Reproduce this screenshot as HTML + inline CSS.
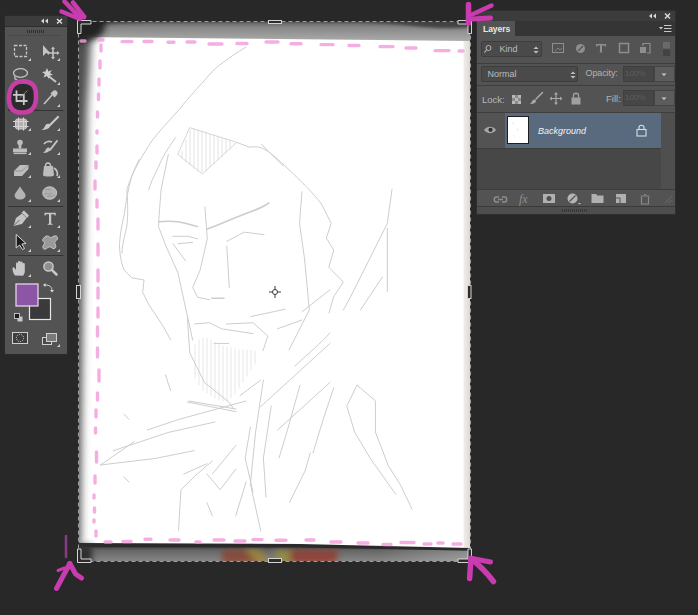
<!DOCTYPE html>
<html><head><meta charset="utf-8">
<style>
*{margin:0;padding:0;box-sizing:border-box}
html,body{width:698px;height:615px;overflow:hidden;background:#282828;font-family:"Liberation Sans",sans-serif}
.a{position:absolute}
svg{position:absolute;left:0;top:0}
</style></head>
<body>
<svg width="698" height="615" viewBox="0 0 698 615">
<defs>
<clipPath id="cvc"><rect x="78" y="21" width="393" height="541"/></clipPath>
<filter id="b4" x="-50%" y="-50%" width="200%" height="200%"><feGaussianBlur stdDeviation="4"/></filter>
<filter id="b3" x="-50%" y="-50%" width="200%" height="200%"><feGaussianBlur stdDeviation="3"/></filter>
<filter id="b2" x="-50%" y="-50%" width="200%" height="200%"><feGaussianBlur stdDeviation="1.5"/></filter>
<filter id="sk" x="-10%" y="-10%" width="120%" height="120%"><feGaussianBlur stdDeviation="0.45"/></filter>
<filter id="b1" x="-50%" y="-50%" width="200%" height="200%"><feGaussianBlur stdDeviation="0.6"/></filter>
<linearGradient id="tg" x1="0" y1="0" x2="0" y2="1">
<stop offset="0" stop-color="#2e2e2e"/><stop offset="0.3" stop-color="#5a5a5a"/><stop offset="0.7" stop-color="#8c8c8c"/><stop offset="1" stop-color="#a0a0a0"/>
</linearGradient>
<linearGradient id="tg3" x1="0" y1="21" x2="0" y2="40" gradientUnits="userSpaceOnUse"><stop offset="0" stop-color="#606060"/><stop offset="0.35" stop-color="#868686"/><stop offset="1" stop-color="#9e9e9e"/></linearGradient>
<linearGradient id="tg2" x1="0" y1="0" x2="0" y2="1"><stop offset="0" stop-color="#000" stop-opacity="0"/><stop offset="0.75" stop-color="#fff" stop-opacity="0.05"/><stop offset="1" stop-color="#fff" stop-opacity="0.12"/></linearGradient>
<linearGradient id="rs" x1="462" y1="0" x2="474" y2="0" gradientUnits="userSpaceOnUse"><stop offset="0" stop-color="#fff" stop-opacity="0"/><stop offset="0.2" stop-color="#eeebe6"/><stop offset="0.7" stop-color="#e0d9d4"/><stop offset="1" stop-color="#d4ccc8"/></linearGradient>
<linearGradient id="bg" x1="0" y1="0" x2="0" y2="1">
<stop offset="0" stop-color="#2a2a2a"/><stop offset="0.25" stop-color="#666"/><stop offset="0.65" stop-color="#858585"/><stop offset="1" stop-color="#8a8a8a"/>
</linearGradient>
<linearGradient id="bgh" x1="0" y1="0" x2="1" y2="0">
<stop offset="0" stop-color="#fff" stop-opacity="0"/><stop offset="0.75" stop-color="#fff" stop-opacity="0"/><stop offset="1" stop-color="#fff" stop-opacity="0.25"/>
</linearGradient>
</defs>
<!-- canvas -->
<g clip-path="url(#cvc)">
<rect x="78" y="21" width="393" height="541" fill="#fff"/>
<!-- left shade -->
<polygon points="60,21 92,21 90,60 87,110 85,200 83,300 81.5,420 80.5,545 60,545" fill="#505050" filter="url(#b4)"/>
<!-- top band -->
<polygon points="70,10 480,10 480,41 380,40 280,39 180,38 78,37" fill="url(#tg3)"/>
<polygon points="70,10 480,10 480,41 380,40 280,39 180,38 78,37" fill="url(#tg2)"/>
<path d="M70,10 L480,10 L480,26 C455,30 430,28 405,25 C380,22.5 360,22 340,22 C300,21.5 200,21.5 150,22 L70,25 Z" fill="#424242" filter="url(#b2)"/>
<polygon points="60,10 108,10 104,32 96,39 60,48" fill="#222" filter="url(#b3)"/>
<!-- right strip -->
<rect x="462" y="41" width="12" height="510" fill="url(#rs)"/>
<!-- bottom band -->
<polygon points="70,544 300,545 470,549 480,549 480,570 70,570" fill="url(#bg)"/>
<polygon points="70,544 300,545 470,549 480,549 480,570 70,570" fill="url(#bgh)"/>
<g filter="url(#b3)" opacity="0.75">
<polygon points="222,550 262,550 262,563 222,563" fill="#8e3a26"/>
<polygon points="245,549 258,549 272,563 258,563" fill="#a68a2c"/>
<polygon points="275,550 290,550 292,563 276,563" fill="#9c9034"/>
<polygon points="290,550 338,550 336,563 290,563" fill="#983224"/>
</g>
<polygon points="70,543 300,544 470,548 480,548 480,551 300,547.5 70,547" fill="#2a2a2a" filter="url(#b1)"/>
<rect x="66" y="545" width="26" height="20" fill="#2e2e2e" filter="url(#b3)"/>
</g>
<!-- sketch -->
<g fill="none" stroke="#b8b8b8" stroke-width="1" stroke-linecap="round" stroke-linejoin="round" opacity="0.7" filter="url(#sk)">
<path d="M246,47 C228,58 215,68 210,74 C198,88 188,98 180.5,108 C170,120 160,130 151,142 C143,155 136,166 131.7,176.6 C128,190 126,200 124.4,214 C121,228 119.5,240 119.5,246 C120,258 122,265 124.4,270.5 L131.7,277.8 L144,280 L142.7,292.4 L148.8,304.6 L163.4,326.6 L170.7,340"/>
<path d="M139,159.5 C134,170 130,180 126.8,190 C128,205 128,215 126.8,226.6 C124,238 122,247 122,253"/>
<path d="M175.6,137.6 C168,148 162,158 158.5,166.8 C154,176 150,184 148.8,190"/>
<path d="M190,127.8 L236.6,142.4 L202.4,174 L178,154.6 Z" stroke-width="0.8"/>
<path d="M182,151 V158 M186,140 V162 M190,130 V165 M194,129 V168 M198,130 V171 M202,131 V173 M206,132 V171 M210,134 V167 M214,135 V164 M218,136 V160 M222,137 V157 M226,139 V153 M230,140 V149" stroke-width="0.55"/>
<path d="M236.6,142.4 L250,147.3 C262,145 268,150 288,168.8 C300,180 315,195 321.5,204"/>
<path d="M261.5,144.4 L283.4,166"/>
<path d="M321.5,204 L331.2,223.4 L326.3,238 L333.7,250 L328.8,267.3 L343.4,282 L333.7,296.6 L329,313"/>
<path d="M302,191.7 L299.5,223.4 L304.4,257.6 L309.3,310 L289,350"/>
<path d="M392,189.3 L387.3,223.4 L372.7,252.7 L350.7,296.6 L343.4,310"/>
<path d="M387.3,228.3 L387.3,291.7"/>
<path d="M360.5,310 L382.4,277"/>
<path d="M168.3,154.6 L161,190 C160,205 159,215 158.5,226.6 L165.9,246 L178,273 L185.4,307 L192.7,340"/>
<path d="M158.5,221.7 C165,221 172,221 178,221.7 C186,223 192,225 197.6,226.6" stroke-width="1.5"/>
<path d="M173,236.3 L187.8,236.3 L197.6,238.8 M178,243.7 L192.7,242.4"/>
<path d="M173,243.7 L185.4,260.7"/>
<path d="M204.9,207 L207.3,238.8 L200,270.5 L192.7,287.6 L197.6,297.3 L209.8,299.8"/>
<path d="M211.7,298.3 L224,298.3" stroke-width="1.4"/>
<path d="M207.3,229 C222,224 238,216 250,212 C258,209 265,206 268.8,203" stroke-width="1.6"/>
<path d="M226.8,241.2 L244.4,232.2 L264,234.6"/>
<path d="M226.8,246 L229.3,287.6"/>
<path d="M194.6,324 L209.3,322.7 L221.5,328.8 L253.2,333.7"/>
<path d="M214,343.4 L228.8,343.4"/>
<path d="M226.3,324 L253,322.7 L267.8,336 L263,350.7"/>
<path d="M250.7,316.6 L284.9,309.3 M302,311.7 L330,289.8"/>
<path d="M187.3,316.6 L189.8,353 L204.4,382.4 L228.8,402 L233.7,409"/>
<path d="M195,345 V378 M199,340 V385 M203,338 V390 M207,338 V393 M211,340 V396 M215,342 V398 M219,344 V400 M223,346 V401 M227,347 V401 M231,348 V398 M235,349 V394 M239,350 V388 M243,350 V382 M247,350 V376 M251,350 V370 M255,351 V364" stroke-width="0.5"/>
<path d="M260.5,406.8 L330,343.4 M277.6,430 L330,382.4 M277.6,328.8 L302,320"/>
<path d="M187.3,402 L236,411.7"/>
<path d="M100.4,465 L134.3,441.6 M100.4,465 L155,458.5 L194,450.7"/>
<path d="M113.4,450.7 L168,432.5 L215,422"/>
<path d="M147.3,430 L178.5,419.5 L246,401"/>
<path d="M189,401 L235.8,409"/>
<path d="M165.5,375 L170.7,390.8"/>
<path d="M123.9,414 L129,419.5 M123.9,476.8 L129,482"/>
<path d="M178.5,530 L181,489.8 L194,476.8 L212.4,461"/>
<path d="M183.75,474 L207,463.75"/>
<path d="M207,474 L220.2,489.8 L235.8,469 M235.8,445.5 L212.4,474"/>
<path d="M207,502.8 L212.4,515.8 M246,482 L235.8,515.8"/>
<path d="M357,385.2 L346.8,406 L354.6,432 L370,458 L396,494.6 M357,385.2 L375.4,400.8 L375.4,432 L388.4,466 L400,484 L412,509"/>
<path d="M263.4,380 L255.6,432 L250.4,484 L260.8,531"/>
<path d="M300,385.2 L286.9,432 L279,458"/>
<path d="M333.75,387.8 L323.3,419 L313,453"/>
<path d="M310.3,453 L305,471 L289.5,502.4"/>
<path d="M271.25,406 L263.4,458 L266,497"/>
<path d="M240,395.6 L260.8,380 M250.4,427 L245.2,458 L253,492"/>
<path d="M295,366 C310,352 320,344 330,333"/>
</g>
<!-- crosshair -->
<g stroke="#3a3a3a" stroke-width="1" fill="none">
<circle cx="275" cy="292" r="2.5"/>
<path d="M275,286 V289.5 M275,294.5 V298 M269,292 H272.5 M277.5,292 H281"/>
</g>
<!-- pink dashes -->
<g stroke="#f29ddc" stroke-width="3.4" stroke-linecap="round" fill="none" opacity="0.82" filter="url(#sk)">
<path d="M81,41 h4 M99,40 h4 M122,41.6 h10 M144,41.5 h8 M168,42.3 h6 M187,42 h8 M209,44 h13 M237,43.5 h10 M266,42 h12 M291,43.8 h10 M321,44.6 h12 M349,45.5 h10 M380,46.6 h13 M406,48 h10 M435,50.6 h14 M459,51 h4"/>
<path d="M101,45 V51 M100,61 V68 M99,79 V85 M98.5,94 V99.5 M97.5,112 V117 M97,131 V133 M97,146 V153 M96,162 V168 M95,181 V189 M97,200 V207 M98,219 V229 M98,244 V255 M98,270 V281 M98,288 V298 M98,308 V317 M97.5,327 V336 M97.5,348 V357 M99,370 V381 M97.5,393 V400 M96,410 V417 M95.5,428 V433 M96.5,452 V462 M95,476 V483 M94,495 V498 M94.5,508 V512 M94,520 V522 M96,531 V536"/>
<path d="M105,542 h6 M123,541.5 h8 M145,539.3 h6 M170,540 h9 M196,542 h4 M214,540 h10 M235,541 h10 M253,539.6 h9 M276,540.3 h10 M306,540 h8 M331,542 h10 M358,543 h10 M383,544.5 h8 M401,542.5 h13 M424,544 h7 M438,543 h5 M453,544 h8"/>
</g>
<!-- crop marquee -->
<rect x="78.5" y="21.5" width="392" height="540" fill="none" stroke="#2a2a2a" stroke-width="1"/>
<rect x="78.5" y="21.5" width="392" height="540" fill="none" stroke="#9c9c9c" stroke-width="1.1" stroke-dasharray="4 3"/>
<g fill="#2c2c2c" stroke="#d4d4d4" stroke-width="1">
<path d="M77.5,20.5 H91 V24 H81 V33.5 H77.5 Z"/>
<path d="M471.5,20.5 H458 V24 H468 V33.5 H471.5 Z"/>
<path d="M77.5,562.5 V549 H81 V559 H91 V562.5 Z"/>
<path d="M471.5,562.5 V549 H468 V559 H458 V562.5 Z"/>
<rect x="268.5" y="20.5" width="13" height="3"/>
<rect x="268.5" y="558.5" width="13" height="4"/>
<rect x="76.5" y="285.5" width="4" height="13"/>
<rect x="467.5" y="285.5" width="3.5" height="13"/>
</g>
</svg>

<!-- toolbar panel -->
<div class="a" style="left:4px;top:15px;width:64px;height:340px;background:#535353;border:1px solid #2b2b2b;border-radius:2px"></div>
<div class="a" style="left:5px;top:16px;width:62px;height:11px;background:#3c3c3c;border-bottom:1px solid #2e2e2e"></div>
<svg width="698" height="615" viewBox="0 0 698 615" style="pointer-events:none">
<g fill="#d8d8d8">
<!-- collapse/close -->
<path d="M44,18.5 L41,21 L44,23.5Z M48,18.5 L45,21 L48,23.5Z"/>
</g>
<path d="M57,19 L62,23.5 M62,19 L57,23.5" stroke="#e0e0e0" stroke-width="1.4"/>
<!-- grip -->
<path d="M27,31.5 H44" stroke="#2f2f2f" stroke-width="3" stroke-dasharray="1 1"/>
<path d="M9,35.5 H62" stroke="#4a4a4a" stroke-width="1"/>
<!-- separators -->
<path d="M8,110.5 H63.5 M8,206.5 H63.5 M8,255.5 H63.5" stroke="#333" stroke-width="1"/>
<!-- flyout triangles -->
<g fill="#d0d0d0">
<path d="M31,58 L31,61 L28,61Z M60,58 L60,61 L57,61Z"/>
<path d="M31,82 L31,85 L28,85Z M60,82 L60,85 L57,85Z"/>
<path d="M60,104 L60,107 L57,107Z"/>
<path d="M31,128 L31,131 L28,131Z M60,128 L60,131 L57,131Z"/>
<path d="M31,152 L31,155 L28,155Z M60,152 L60,155 L57,155Z"/>
<path d="M31,175 L31,178 L28,178Z M60,175 L60,178 L57,178Z"/>
<path d="M31,199 L31,202 L28,202Z M60,199 L60,202 L57,202Z"/>
<path d="M31,225 L31,228 L28,228Z M60,225 L60,228 L57,228Z"/>
<path d="M31,249 L31,252 L28,252Z M60,249 L60,252 L57,252Z"/>
<path d="M31,274 L31,277 L28,277Z"/>
<path d="M60,344 L60,347 L57,347Z"/>
</g>
<g fill="none" stroke="#c4c4c4" stroke-width="1.3">
<!-- marquee -->
<rect x="14.5" y="45.5" width="12" height="11" stroke-dasharray="3 1.5"/>
<!-- lasso -->
<ellipse cx="20.5" cy="73" rx="7" ry="4.3"/>
<path d="M15,76 C14,79 16,80 17,79"/>
</g>
<!-- move -->
<path d="M43,45 L43,56 L46,53 L50,53 Z" fill="#c4c4c4"/>
<path d="M53,48 V58 M48,53 H58" stroke="#c4c4c4" stroke-width="1.6"/>
<path d="M53,46.5 L51,49 H55Z M53,59.5 L51,57 H55Z M46.5,53 L49,51 V55Z M59.5,53 L57,51 V55Z" fill="#c4c4c4"/>
<!-- wand -->
<path d="M46,74 L56,82" stroke="#c4c4c4" stroke-width="2"/>
<path d="M47,68 L48.5,71.5 L52,70 L50,73 L53,75 L49.5,75.5 L49,79 L47,76 L43.5,77.5 L45,74 L42,72 L45.5,71.5Z" fill="#cfcfcf"/>
<!-- crop selected bg + icon -->
<path d="M8,110 H38" stroke="#333" stroke-width="1"/>
<path d="M22,84 C31,83.5 34.5,88 34.5,96 C35,105 31.5,110.5 22.5,111 C13.5,111.5 10,106 10.5,97 C11,89 14.5,84.5 22,84Z" fill="#2b2b2b"/>
<path d="M16.5,90.5 V101 H27.5 M13,94.8 H23.8 V105" fill="none" stroke="#cacaca" stroke-width="1.8"/>
<path d="M19.5,98 L27.5,90.5" stroke="#9a9a9a" stroke-width="0.8"/>
<!-- magenta ring -->
<path d="M21,81.5 C32,80.5 36,86 36,95 C36.5,106 32.5,112.5 22.5,112.5 C12.5,113 8.5,107 9,97 C9.5,88 13.5,82 21,81.5Z" fill="none" stroke="#c63fa6" stroke-width="4.6"/>
<!-- eyedropper -->
<path d="M44,104 L52,95" stroke="#c4c4c4" stroke-width="1.6"/>
<path d="M50.5,93.5 L54.5,97.5 L56.5,95.5 C58,94 58,92 56.5,91 C55.5,90 54,90 52.5,91.5Z" fill="#c4c4c4"/>
<!-- healing -->
<rect x="15.5" y="119" width="11" height="10" rx="2" fill="#b8b0b0" stroke="#d0d0d0" stroke-width="1"/>
<path d="M13,121.5 H28.5 M13,126.5 H28.5 M18.5,117.5 V130.5 M23.5,117.5 V130.5" stroke="#d6d6d6" stroke-width="1"/>
<!-- brush -->
<path d="M49,126 L58,117" stroke="#c8c8c8" stroke-width="2.2" stroke-linecap="round"/>
<path d="M41.5,130 C45,130 50,129 50,125.5 C50,123.5 47.5,123 46,124.5 C44.5,126.5 44,129 41.5,130Z" fill="#c8c8c8"/>
<!-- stamp -->
<g fill="#bdbdbd">
<circle cx="20" cy="142.5" r="2.8"/>
<rect x="18.6" y="143" width="2.8" height="5.5"/>
<rect x="13" y="148.5" width="14" height="3.5"/>
<rect x="13.5" y="152.5" width="13" height="1.6"/>
</g>
<!-- history brush -->
<path d="M50,150 L57,141" stroke="#c4c4c4" stroke-width="2" stroke-linecap="round"/>
<path d="M43,153 C46,153 50,152 50,149 C50,147.5 48,147 47,148 C45.5,149.5 45,152 43,153Z" fill="#c4c4c4"/>
<path d="M44,144 C46,141 50,141 52,142" fill="none" stroke="#c4c4c4" stroke-width="1.6"/>
<!-- eraser -->
<path d="M14,171 L20,165 L28.5,165 L28.5,169 L22,176 L14,176Z" fill="#bdbdbd"/>
<path d="M14,171 L22,171 L28.5,165" fill="none" stroke="#8a8a8a" stroke-width="0.8"/>
<!-- bucket -->
<path d="M44,166 L53,166 L54,175 C54,177 43,177 43,175Z" fill="#bdbdbd"/>
<path d="M45.5,166 C45.5,162 50.5,162 50.5,166" fill="none" stroke="#c4c4c4" stroke-width="1.3"/>
<path d="M54,168 C57,170 58,173 57,176" fill="none" stroke="#c4c4c4" stroke-width="1.6"/>
<!-- drop -->
<path d="M20,186.2 C22,190 25.5,193 25.5,195.5 C25.5,198 23,199.5 20,199.5 C17,199.5 14.7,198 14.7,195.5 C14.7,193 18,190 20,186.2Z" fill="#b4b4b4"/>
<!-- sponge -->
<ellipse cx="49.7" cy="193" rx="7" ry="6.3" fill="#b0b0b0" stroke="#cfcfcf" stroke-width="0.8"/>
<path d="M45,190 C47,188 49,191 51,189 M44.5,194 C47,192 49,196 52,193 M47,197 C49,195 52,198 55,195" fill="none" stroke="#8a8a8a" stroke-width="0.7"/>
<!-- pen -->
<path d="M13.5,226 L16,218 L22,213.5 L26.5,218 L22,224Z" fill="#c4c4c4"/>
<path d="M21.5,212.5 L24,210.5 L29,215.5 L27,218Z" fill="#c4c4c4"/>
<path d="M14,225.5 L19.5,220" stroke="#555" stroke-width="0.8"/>
<!-- T -->
<path d="M44.5,212.8 H55.7 V215.5 H54.8 L54,214.2 H51.2 V223.5 L52.7,224.2 V224.8 H47.5 V224.2 L49,223.5 V214.2 H46.2 L45.4,215.5 H44.5Z" fill="#c8c8c8"/>
<!-- path selection -->
<path d="M16.2,234.5 L16.2,248 L19.5,245 L22.5,249.5 L24.5,248.5 L21.8,244 L26,243.5Z" fill="#1c1c1c" stroke="#d8d8d8" stroke-width="1"/>
<!-- custom shape -->
<path d="M44,238 C46,234 50,237 51,238 C53,236 58,234 57.5,239 C56,241 54,242 55,244 C57,247 55,250 52,248 C50,246 48,247 46,249 C42,250 42,246 45,243 C42,241 42,239 44,238Z" fill="#9a9a9a" stroke="#c8c8c8" stroke-width="1"/>
<!-- hand -->
<path d="M15,275.5 C13,273 12.5,270.5 12.5,268 C13,267 14,267 15,268.5 L16,270 L16,263.5 C16,262 18,262 18,263.5 L18,268 L18,262 C18,260.5 20.3,260.5 20.3,262 L20.3,268 L20.3,262.5 C20.3,261 22.6,261 22.6,262.5 L22.6,268.5 L22.6,264 C22.6,262.5 24.8,262.5 24.8,264 L24.8,271 C24.8,273 24,274.5 23,275.7Z" fill="#c8c8c8"/>
<!-- zoom -->
<circle cx="48.5" cy="266.5" r="4.6" fill="#8e8e8e" stroke="#c8c8c8" stroke-width="1.5"/>
<path d="M51.8,269.8 L56.5,274.5" stroke="#c8c8c8" stroke-width="2.5" stroke-linecap="round"/>
<!-- colors -->
<rect x="29.5" y="298.5" width="21" height="21" fill="#3a3a3a" stroke="#e8e8e8" stroke-width="1.2"/>
<rect x="16" y="284" width="22" height="22" fill="#8c55a6" stroke="#ebe0ee" stroke-width="1.2"/>
<path d="M45,285 C50,285 52,287 52,291" fill="none" stroke="#d8d8d8" stroke-width="1"/>
<path d="M43,285 L45.5,283 V287Z M52,292.5 L50,290 H54Z" fill="#d8d8d8"/>
<rect x="17.5" y="316.5" width="5" height="5" fill="#c8c8c8"/>
<rect x="14.5" y="313.5" width="5" height="5" fill="#1e1e1e" stroke="#d8d8d8" stroke-width="0.8"/>
<!-- quick mask -->
<rect x="12.5" y="332.5" width="15" height="11" fill="#3e3e3e" stroke="#cfcfcf" stroke-width="1"/>
<circle cx="20" cy="338" r="3.6" fill="none" stroke="#cfcfcf" stroke-width="1" stroke-dasharray="1.2 1"/>
<!-- screen mode -->
<rect x="42.5" y="337.5" width="9" height="7" fill="#484848" stroke="#d0d0d0" stroke-width="1"/>
<rect x="46.5" y="333.5" width="10" height="8" fill="#7a7a7a" stroke="#d0d0d0" stroke-width="1"/>
</svg>

<!-- layers panel -->
<div class="a" style="left:476px;top:9.5px;width:200px;height:205.5px;background:#535353;border:1px solid #2e2e2e"></div>
<div class="a" style="left:477px;top:10.5px;width:198px;height:10.5px;background:#3c3c3c"></div>
<div class="a" style="left:477px;top:21px;width:198px;height:15px;background:#353535"></div>
<div class="a" style="left:477px;top:21px;width:38px;height:15px;background:#535353"></div>
<div class="a" style="left:483px;top:24px;font-size:8.6px;color:#e8e8e8;font-weight:bold;letter-spacing:-0.1px">Layers</div>
<!-- separators -->
<div class="a" style="left:477px;top:63px;width:198px;height:1px;background:#3e3e3e"></div>
<div class="a" style="left:477px;top:85px;width:198px;height:1px;background:#3e3e3e"></div>
<!-- kind dropdown -->
<div class="a" style="left:481px;top:41px;width:61px;height:16px;background:#4a4a4a;border:1px solid #3d3d3d;border-radius:2px"></div>
<div class="a" style="left:499.5px;top:43.5px;font-size:9px;color:#bcbcbc">Kind</div>
<!-- normal dropdown -->
<div class="a" style="left:481px;top:66px;width:97px;height:16px;background:#4a4a4a;border:1px solid #3d3d3d;border-radius:2px"></div>
<div class="a" style="left:487.5px;top:68.5px;font-size:9px;color:#bcbcbc">Normal</div>
<div class="a" style="left:585.5px;top:67.5px;font-size:9px;color:#b4b4b4;letter-spacing:-0.1px">Opacity:</div>
<div class="a" style="left:623px;top:66px;width:31px;height:16px;background:#464646;border:1px solid #3f3f3f"></div>
<div class="a" style="left:625px;top:69px;font-size:8px;color:#5e5e5e">100%</div>
<div class="a" style="left:654px;top:66px;width:21px;height:16px;background:#5c5c5c;border:1px solid #444"></div>
<div class="a" style="left:482px;top:94px;font-size:9.5px;color:#b8b8b8">Lock:</div>
<div class="a" style="left:606px;top:93px;font-size:9.5px;color:#b4b4b4">Fill:</div>
<div class="a" style="left:623px;top:90px;width:31px;height:16px;background:#464646;border:1px solid #3f3f3f"></div>
<div class="a" style="left:625px;top:93px;font-size:8px;color:#5e5e5e">100%</div>
<div class="a" style="left:654px;top:90px;width:21px;height:16px;background:#5c5c5c;border:1px solid #444"></div>
<!-- layer row -->
<div class="a" style="left:477px;top:112px;width:198px;height:1px;background:#3e3e3e"></div>
<div class="a" style="left:505px;top:113px;width:156px;height:35px;background:#5a6a7e"></div>
<div class="a" style="left:477px;top:148px;width:198px;height:1px;background:#3c3c3c"></div>
<div class="a" style="left:477px;top:149px;width:184px;height:40px;background:#474747"></div>
<div class="a" style="left:661px;top:113px;width:14px;height:76px;background:#4f4f4f"></div>
<div class="a" style="left:507px;top:116px;width:22px;height:28px;background:#fff;border:1.5px solid #1e1e1e"></div>
<div class="a" style="left:538px;top:126px;font-size:9px;color:#eef2f6;font-style:italic">Background</div>
<!-- footer -->
<div class="a" style="left:477px;top:189px;width:198px;height:1px;background:#3c3c3c"></div>
<div class="a" style="left:477px;top:206px;width:198px;height:1px;background:#3a3a3a"></div>
<div class="a" style="left:477px;top:207px;width:198px;height:7px;background:#4e4e4e"></div>
<svg width="698" height="615" viewBox="0 0 698 615" style="pointer-events:none">
<!-- header icons -->
<path d="M652,13.5 L649,16 L652,18.5Z M656,13.5 L653,16 L656,18.5Z" fill="#d8d8d8"/>
<path d="M665,13.5 L670,18.5 M670,13.5 L665,18.5" stroke="#e0e0e0" stroke-width="1.4"/>
<path d="M659,27 L663,27 L661,29.5Z" fill="#d0d0d0"/>
<path d="M664,25.5 H671.5 M664,28.5 H671.5 M664,31.5 H671.5" stroke="#c8c8c8" stroke-width="1"/>
<!-- kind search icon + arrows -->
<circle cx="488.5" cy="48" r="2.5" fill="none" stroke="#b8b8b8" stroke-width="1"/>
<path d="M486.5,50 L484.5,52.5" stroke="#b8b8b8" stroke-width="1.2"/>
<path d="M536,46.5 L538.5,49 H533.5Z M536,53.5 L538.5,51 H533.5Z" fill="#c0c0c0"/>
<path d="M573,71.5 L575.5,74 H570.5Z M573,78.5 L575.5,76 H570.5Z" fill="#c0c0c0"/>
<!-- filter icons -->
<rect x="552.5" y="43.5" width="11" height="9" fill="none" stroke="#8e8e8e" stroke-width="1"/>
<path d="M555,51 L558,48 L560,50 L562,48" fill="none" stroke="#8e8e8e" stroke-width="0.8"/>
<circle cx="580.5" cy="48.5" r="4.5" fill="#8e8e8e"/>
<path d="M578,51 L583,46" stroke="#535353" stroke-width="1.3"/>
<path d="M596,44 H606 V46.5 H605 L604.5,45.5 H602 V52 L603,52.5 H599 L600,52 V45.5 H597.5 L597,46.5 H596Z" fill="#8e8e8e"/>
<rect x="619.5" y="43.5" width="9" height="9" fill="none" stroke="#8e8e8e" stroke-width="1.5"/>
<rect x="640" y="47" width="6" height="6" fill="#8e8e8e"/>
<path d="M643,46 V43.5 H650 V53 H647" fill="none" stroke="#8e8e8e" stroke-width="1.2"/>
<rect x="663" y="42" width="7" height="6.5" fill="#6a6a6a"/>
<rect x="663" y="49.5" width="7" height="6.5" fill="#434343"/>
<!-- dropdown arrows for opacity/fill -->
<path d="M661.5,73.5 H666.5 L664,76Z M661.5,97.5 H666.5 L664,100Z" fill="#c8c8c8"/>
<!-- lock icons -->
<g fill="#9a9a9a">
<rect x="512" y="95" width="9" height="9" fill="#8a8a8a"/>
<rect x="512" y="95" width="3" height="3" fill="#b8b8b8"/><rect x="518" y="95" width="3" height="3" fill="#b8b8b8"/>
<rect x="515" y="98" width="3" height="3" fill="#b8b8b8"/>
<rect x="512" y="101" width="3" height="3" fill="#b8b8b8"/><rect x="518" y="101" width="3" height="3" fill="#b8b8b8"/>
</g>
<path d="M536,99 L542.5,92.5" stroke="#a8a8a8" stroke-width="1.6" stroke-linecap="round"/>
<path d="M529.5,104 C532,104 536,103.5 536,101 C536,99.5 534,99 533,100 C531.5,101.5 531.5,103.5 529.5,104Z" fill="#a8a8a8"/>
<path d="M556,93 V104 M550.5,98.5 H561.5" stroke="#a8a8a8" stroke-width="1.2"/>
<path d="M556,92 L554,94.5 H558Z M556,105 L554,102.5 H558Z M549.5,98.5 L552,96.5 V100.5Z M562.5,98.5 L560,96.5 V100.5Z" fill="#a8a8a8"/>
<rect x="571.5" y="97.5" width="9" height="7" fill="#a0a0a0"/>
<path d="M573.5,97.5 V95.5 C573.5,92.5 578.5,92.5 578.5,95.5 V97.5" fill="none" stroke="#a0a0a0" stroke-width="1.3"/>
<!-- layer eye -->
<path d="M484,130 C487,125.8 493,125.8 496,130 C493,134.2 487,134.2 484,130Z" fill="#a6a6a6"/>
<circle cx="490.5" cy="129.8" r="2.1" fill="#2e2e2e"/>
<!-- thumb content -->
<path d="M512,122 L514,125 M517,128 L518,131 M513,135 L515,137" stroke="#ddd" stroke-width="0.6"/>
<!-- layer lock -->
<rect x="637" y="129.5" width="9" height="6.5" fill="none" stroke="#d8dde4" stroke-width="1.1"/>
<path d="M639,129.5 V127.5 C639,124.5 644,124.5 644,127.5 V129.5" fill="none" stroke="#d8dde4" stroke-width="1.1"/>
<!-- footer icons -->
<g fill="none" stroke="#8e8e8e" stroke-width="1.4">
<path d="M499,197 H496.5 C493.5,197 493.5,202 496.5,202 H499 M502,197 H504.5 C507.5,197 507.5,202 504.5,202 H502 M498,199.5 H503"/>
</g>
<text x="519" y="203" font-family="Liberation Serif" font-style="italic" font-size="12" fill="#8e8e8e">fx</text>
<rect x="543" y="194" width="12" height="9" fill="#b0b0b0"/>
<circle cx="549" cy="198.5" r="2.5" fill="#4f4f4f"/>
<circle cx="572.5" cy="198.5" r="5" fill="#b4b4b4"/>
<path d="M569.5,201.5 L575.5,195.5" stroke="#535353" stroke-width="1.3"/>
<path d="M578,203 H581 L579.5,204.5Z" fill="#c8c8c8"/>
<path d="M591.5,194 H596 L597.5,195.5 H603.5 V203 H591.5Z" fill="#b0b0b0"/>
<rect x="616" y="194" width="10" height="9" fill="#b0b0b0"/>
<path d="M616,198 H620 V203" fill="none" stroke="#535353" stroke-width="1"/>
<path d="M640.5,196 H649.5 M644,194.5 H646 M641.5,197 V204 H648.5 V197" fill="none" stroke="#8a8a8a" stroke-width="1.2"/>
<path d="M672,196 L665,203 M672,199.5 L668.5,203" stroke="#6e6e6e" stroke-width="0.8"/>
<path d="M562,210.5 H588" stroke="#2e2e2e" stroke-width="2" stroke-dasharray="1 1"/>
</svg>
<svg width="698" height="615" viewBox="0 0 698 615" style="pointer-events:none">
<!-- pink arrows -->
<g stroke="#c93caf" stroke-linecap="round" fill="none">
<path d="M64.5,1.5 L79,16.5" stroke-width="4.5"/>
<path d="M73,2.5 L83.5,16" stroke-width="4.5"/>
<path d="M61.5,11.5 L80,19" stroke-width="4.5"/>
<path d="M76,15 L84,17" stroke-width="5"/>
<path d="M468.5,4.5 L468.5,23" stroke-width="5.5"/>
<path d="M472,14.5 L491.5,5.5" stroke-width="4.5"/>
<path d="M472,19 L490.5,18" stroke-width="5"/>
<path d="M66,536 L66,557" stroke-width="2.5" stroke="#8a3a84"/>
<path d="M69.8,563.5 L56.5,588.5" stroke-width="5"/>
<path d="M69.8,563.5 L75.6,574 L81.5,578" stroke-width="5"/>
<path d="M58,570.5 L64.5,568" stroke-width="3"/>
<path d="M470.9,558.5 L469.6,578.5" stroke-width="5.5"/>
<path d="M470.9,558.5 Q484,569 493.5,581.5" stroke-width="5.5"/>
<path d="M472,558.5 L490.5,562" stroke-width="5"/>
</g>
</svg>
</body></html>
